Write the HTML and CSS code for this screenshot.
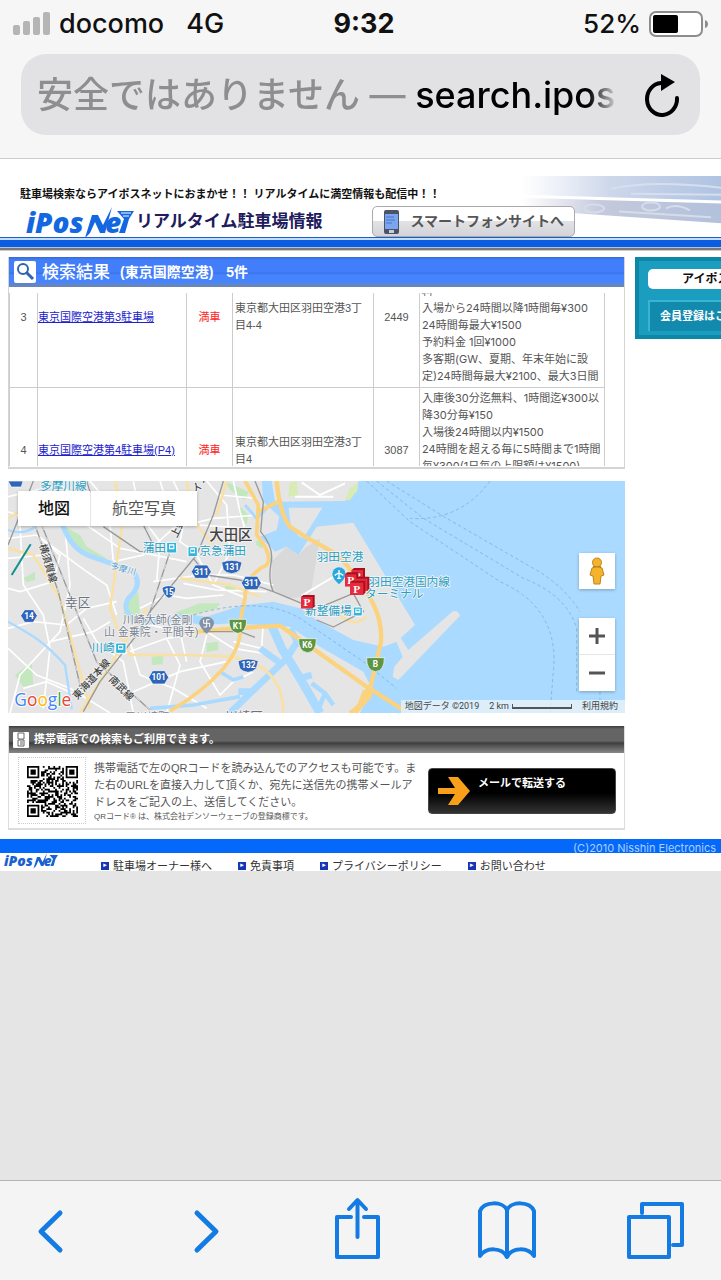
FILE: index.html
```html
<!DOCTYPE html>
<html lang="ja">
<head>
<meta charset="utf-8">
<meta name="viewport" content="width=device-width, initial-scale=1">
<title>iPosNet リアルタイム駐車場情報</title>
<link rel="stylesheet" href="styles.css">
</head>
<body>
<header class="browser-top">
  <div class="status">
    <div class="status-left">
      <svg class="signal" viewBox="0 0 38 24" aria-hidden="true"><rect x="0" y="13" width="7" height="10" rx="2"/><rect x="10" y="9" width="7" height="14" rx="2"/><rect x="20" y="5" width="7" height="18" rx="2"/><rect x="30" y="0" width="7" height="23" rx="2"/></svg>
      <span>docomo</span><span class="network">4G</span>
    </div>
    <div class="clock">9:32</div>
    <div class="status-right">
      <span>52%</span>
      <svg class="battery" viewBox="0 0 60 26" aria-hidden="true"><rect x="1" y="1" width="52" height="24" rx="6" fill="#fff" stroke="#8d8d8d" stroke-width="2"/><rect x="4" y="4" width="25" height="18" rx="2"/><path d="M56 9q3 1 3 4t-3 4z" fill="#8d8d8d"/></svg>
    </div>
  </div>
  <div class="address">
    <div class="address-text"><span class="insecure">安全ではありません —</span> search.ipos</div>
    <button class="reload" aria-label="再読み込み"><svg viewBox="0 0 40 44"><path d="M19 10A15 16 0 1 0 35 25" fill="none" stroke="#000" stroke-width="4" stroke-linecap="round"/><path d="M19 1v17l14-9z"/></svg></button>
  </div>
</header>

<main class="site">
  <div class="masthead">
    <svg class="skyline" viewBox="0 0 200 62" preserveAspectRatio="none" aria-hidden="true">
      <defs>
        <linearGradient id="sky"><stop offset="0" stop-color="#d5def0" stop-opacity="0"/><stop offset=".45" stop-color="#ccd7ea"/><stop offset="1" stop-color="#afc3e2"/></linearGradient>
        <linearGradient id="road"><stop offset="0" stop-color="#cfcfe0" stop-opacity="0"/><stop offset=".4" stop-color="#c4c9dc"/><stop offset="1" stop-color="#b3c1dc"/></linearGradient>
      </defs>
      <path d="M0 0H200V25L0 19z" fill="url(#sky)"/>
      <path d="M0 22L200 28V48L0 34z" fill="url(#road)"/>
      <path d="M90 13Q130 4 200 12M110 18L200 19" stroke="#d5dff0" stroke-width="2" fill="none"/>
      <g fill="none" stroke="#d5dcea" stroke-width="2"><ellipse cx="73" cy="33" rx="10" ry="4"/><ellipse cx="130" cy="31" rx="9" ry="4"/><path d="M98 36L190 42M145 33q10-6 24 2"/></g>
    </svg>
    <p class="tagline">駐車場検索ならアイポスネットにおまかせ！！ リアルタイムに満空情報も配信中！！</p>
    <div class="brand-row">
      <h1 class="brand">
        <svg class="logo" viewBox="0 0 110 30" role="img" aria-label="iPosNet"><text x="0" y="26">iPos</text><path d="M59 31L66 8H72L77 18L86 0L79 26H74L69 15L64 26z"/><text class="logo-e" x="79" y="26">e</text><path d="M93 26L98 12L91 4H108L103 12L99 26z"/><path d="M95 6h10M97 9h6" stroke="#fff"/></svg>
        <span>リアルタイム駐車場情報</span>
      </h1>
      <button class="phone-site">
        <svg viewBox="0 0 18 26" aria-hidden="true"><rect x="1" y="1" width="15" height="24" rx="2" fill="#4c5364"/><rect x="2" y="5" width="13" height="15" fill="#79a6ef"/><path d="M3 8h8M3 11h9M3 14h6" stroke="#4a77c8"/><rect x="6" y="21" width="5" height="3" fill="#c9ced8"/></svg>
        スマートフォンサイトへ
      </button>
    </div>
  </div>
  <div class="rule"></div>

  <div class="columns">
    <div class="main">
      <section class="results">
        <h2 class="results-head">
          <svg viewBox="0 0 24 24" aria-hidden="true"><rect x="1" y="1" width="22" height="22" rx="2" fill="#fff"/><circle cx="10" cy="9" r="5" fill="none" stroke="#2f63b5" stroke-width="2"/><path d="M13 12l7 7" stroke="#2f63b5" stroke-width="3"/></svg>
          <span class="results-title">検索結果</span><span>(東京国際空港)</span><span class="results-count">5件</span>
        </h2>
        <div class="results-scroll">
          <table>
            <colgroup><col class="c-no"><col class="c-name"><col class="c-state"><col><col class="c-dist"><col class="c-fee"></colgroup>
            <tbody>
              <tr class="row-three">
                <td class="center">3</td>
                <td><a href="#p3">東京国際空港第3駐車場</a></td>
                <td class="center full">満車</td>
                <td class="pad">東京都大田区羽田空港3丁<br>目4-4</td>
                <td class="center">2449</td>
                <td class="fee">料<br>入場から24時間以降1時間毎¥300<br>24時間毎最大¥1500<br>予約料金 1回¥1000<br>多客期(GW、夏期、年末年始に設<br>定)24時間毎最大¥2100、最大3日間</td>
              </tr>
              <tr class="row-four">
                <td class="center">4</td>
                <td><a href="#p4">東京国際空港第4駐車場(P4)</a></td>
                <td class="center full">満車</td>
                <td class="pad">東京都大田区羽田空港3丁<br>目4</td>
                <td class="center">3087</td>
                <td class="fee">入庫後30分迄無料、1時間迄¥300以<br>降30分毎¥150<br>入場後24時間以内¥1500<br>24時間を超える毎に5時間まで1時間<br>毎¥300(1日毎の上限額は¥1500)</td>
              </tr>
            </tbody>
          </table>
        </div>
      </section>

      <section class="map" aria-label="地図">
        <svg class="map-art" viewBox="24 18 1851 696" preserveAspectRatio="xMidYMid slice">
          <rect x="24" y="18" width="1851" height="696" fill="#e5e5e5"/>
          <path d="M815 260L860 215L895 240L920 215L960 190L930 365L860 370L815 340z" fill="#d9d9d9"/>
          <g fill="#c3e8bd">
            <path d="M195 155L240 180L260 215L320 250L300 260L240 225L205 195z"/><path d="M375 390L415 350L420 420L395 445L370 420z"/><path d="M520 415L600 385L660 385L650 400L560 425z"/><path d="M45 600L95 560L100 630L70 635z"/><path d="M455 545L490 540L488 568L455 570z"/><path d="M618 505L655 500L655 525L620 532z"/><path d="M675 333h32v12h-32z"/><path d="M70 310L105 290L105 315L80 322z"/><path d="M675 18L745 50L735 75L690 45z"/><path d="M720 95L745 120L740 150L718 120zM770 195l20 8l-4 18l-18-12z"/>
          </g>
          <g class="local">
            <path d="M24 110L140 150L260 150L360 220L560 260M24 190L110 180L180 240L160 320L60 350L24 340M60 150L70 330L130 420L150 520L130 700M24 460L100 440L200 450L260 400L350 380M24 520L110 600L210 640L330 714M110 180L260 290L320 330L350 420M190 100L210 330L180 470L60 600L30 714M330 150L340 260L430 240L520 160L640 130L780 120M400 18L420 120L480 200L470 320M520 18L560 100L540 200L600 240L740 220M590 240L640 330L740 370M620 18L680 90L690 230L640 330M700 18L720 110L740 180M460 320L600 300L700 300L820 330M420 400L500 360L560 370L670 360M360 540L500 490L620 470L700 520L820 540M390 500L420 600L520 640L620 700M500 490L540 570L500 714M400 650L540 590L680 560M620 480L600 560L660 660L700 620L760 590M430 445L540 470L560 560M250 430L290 500L370 560L400 714M150 500L280 470L330 440M600 150L740 160M660 60L770 70M24 250L130 240M70 640L140 620L230 660M480 18L500 80M270 18L330 90L480 80M24 65L180 30L220 60M550 325L650 345L800 350M790 440L785 520L700 500"/>
          </g>
          <g fill="none" stroke="#aadaff" stroke-linecap="round" stroke-linejoin="round">
            <path d="M190 155Q215 225 275 245T400 290Q430 330 385 370Q360 410 420 445L540 430" stroke-width="15"/>
            <path d="M24 440Q80 470 115 495T195 570L215 700" stroke-width="7"/>
            <path d="M24 165Q60 180 100 160L115 50L180 20" stroke-width="7"/>
          </g>
          <path d="M1075 18H1875V714H1080L1115 640L1090 590L960 515L870 455L700 445L600 450L520 430L540 415L620 425L720 392L820 380L900 400L950 435L1060 495L1150 515L1190 500L1245 450L1060 143L950 155L895 240L860 215L825 230L780 185L830 165L838 125L790 80L785 18H815L825 80L1035 78L1070 50z" fill="#aadaff"/>
          <g fill="none" stroke="#aadaff" stroke-linejoin="round">
            <path d="M810 440L845 520L870 560L900 610L960 714" stroke-width="26"/><path d="M870 460L892 500L860 550L745 660L690 714M780 520L835 560M760 650L715 650M900 610L935 600" stroke-width="20"/><path d="M935 625L975 655L950 714M975 655L1000 690" stroke-width="14"/><path d="M450 700L580 690L720 665M660 590L700 615L730 605" stroke-width="11"/><path d="M735 90L770 130L800 100M800 230L815 260" stroke-width="9"/>
          </g>
          <g fill="#e5e5e5">
            <path d="M866 98H967L910 190L895 182L872 150z"/><path d="M1183 485L1195 478L1225 525L1355 412Q1372 400 1380 422L1195 615L1178 605L1183 575L1208 545z"/>
          </g>
          <path d="M868 25L890 18L895 60L865 65zM1035 75L1050 40L1075 22L1072 45L1050 76z" fill="#d8ebb5"/>
          <g fill="none" stroke="#fff" stroke-width="6"><path d="M905 22L960 60L1035 25M885 65H1000M905 362L1010 300L1025 290"/></g>
          <g fill="none" stroke="#f9e1a6" stroke-width="8" stroke-linejoin="round"><path d="M345 18L370 130L330 400L360 480L390 540L560 540L700 545L770 570Q850 610 850 714M24 130L110 80L150 18M24 220L100 240L180 370L240 590L270 700M560 18L590 150L640 210M440 400L350 540L240 714M540 310L690 330L780 365M680 18L650 120"/><path d="M1020 420Q1060 460 1100 425"/></g>
          <g fill="none" stroke="#fbd27e" stroke-linejoin="round"><path d="M735 18L775 90L770 180Q820 240 800 270Q735 300 735 370L720 440Q730 510 670 580T510 708M845 75L775 110" stroke-width="11"/><path d="M540 475L700 460L840 452L910 500L1100 635L1210 705M830 18Q840 120 870 155Q920 190 970 215Q1030 245 1060 300Q1150 400 1143 500Q1120 600 1110 640Q1090 690 1050 714" stroke-width="13"/><path d="M1092 650L1115 640L1110 665L1070 710z" fill="#fbd27e" stroke-width="10"/></g>
          <g class="rail"><path d="M24 210L100 18M250 710L300 620L410 480L450 410L590 240L640 120L670 18M310 155L420 230L500 230M430 150L460 210M260 18L270 50M580 250L620 300L720 315L820 350L905 385M765 18L790 80L782 170Q825 220 812 270Q805 320 820 350M610 470H720L765 487M950 435L1000 456L1090 410L1060 355L965 395"/></g>
          <g class="rail"><path d="M125 150L290 560L450 705M105 150L175 350L240 630M510 230L445 425"/></g>
          <g class="rail-dash"><path d="M125 150L290 560L450 705M105 150L175 350L240 630M510 230L445 425"/></g>
          <path d="M35 300L92 208" stroke="#159090" stroke-width="6"/>
          <g fill="none" stroke="#88b9dc" stroke-width="3" stroke-dasharray="10 8"><path d="M1100 18L1230 140L1500 320Q1680 400 1660 590L1650 714M1130 18L1270 130L1570 310Q1700 360 1730 460V650M1160 18L1340 130L1600 280Q1690 330 1740 410M1470 18Q1380 140 1230 130M580 420Q780 360 900 430L1090 560L1190 640M1800 650V714"/></g>

          <g class="place"><text x="628" y="196" class="city">大田区</text><text x="195" y="396" class="ward">幸区</text><text x="368" y="448">川崎大師(金剛</text><text x="312" y="484">山 金乗院・平間寺)</text><text x="375" y="738">元川崎町</text><text class="ward" x="675" y="738">川崎区</text></g>
          <g class="station"><text x="428" y="230">蒲田</text><text x="598" y="240">京急蒲田</text><text x="274" y="530">川崎</text><text x="950" y="258">羽田空港</text><text x="1105" y="333">羽田空港国内線</text><text x="1095" y="368">ターミナル</text><text x="915" y="420">新整備場</text><text x="120" y="45">多摩川線</text><text x="330" y="280" transform="rotate(16 330 280)" class="small">多摩川</text></g>
          <g class="railname"><text transform="translate(118 210) rotate(74)">横須賀線</text><text transform="translate(232 675) rotate(-48)">東海道本線</text><text transform="translate(325 615) rotate(45)">南武線</text><text transform="translate(530 190) rotate(-64)">上野東京ライン</text></g>
          <g fill="#31b4dd" stroke="#fff" stroke-width="3"><rect x="500" y="202" width="30" height="32" rx="4"/><rect x="564" y="215" width="28" height="30" rx="4"/><rect x="347" y="504" width="31" height="31" rx="4"/><rect x="1060" y="396" width="27" height="27" rx="4"/></g>
          <g fill="#fff"><path d="M507 208h16v15h-16zM571 220h14v15h-14zM354 510h16v14h-16zM1066 401h15v13h-15z"/></g>
          <g fill="#31b4dd"><path d="M510 212h10v6h-10zM573 224h10v6h-10zM357 514h10v6h-10zM1069 404h9v5h-9z"/></g>
          <g fill="#2f65b8" stroke="#fff" stroke-width="2">
            <path d="M586 270h36l12 20l-12 20h-36l-12-20z"/><path d="M736 304h36l12 20l-12 20h-36l-12-20z"/><path d="M458 587h36l12 20l-12 20h-36l-12-20z"/><path d="M74 404h26l12 18l-12 20h-26l-12-20z"/><path d="M24 18h45l-5 18H34z"/>
            <path d="M665 262q30-12 61 0l-6 22q-8 10-25 12q-17-2-25-12z"/><path d="M714 558q30-12 61 0l-6 22q-8 10-25 12q-17-2-25-12z"/><path d="M486 338q20-12 41 0q-1 24-20 32q-18-8-21-32z"/>
          </g>
          <g fill="#5d9540" stroke="#fff" stroke-width="2"><path d="M687 433h53q0 40-27 42q-27-4-26-42z"/><path d="M896 491h53q0 40-27 42q-27-4-26-42z"/><path d="M1100 548h53q0 40-27 42q-27-4-26-42z"/></g>
          <g class="shield"><text x="604" y="299">311</text><text x="754" y="333">311</text><text x="476" y="616">101</text><text x="87" y="431">14</text><text x="696" y="285">131</text><text x="745" y="580">132</text><text x="507" y="361">15</text><text x="713" y="461">K1</text><text x="922" y="519">K6</text><text x="1126" y="576">B</text></g>
          <path d="M620 476q-22-20-22-31a22 20 0 0 1 44 0q0 11-22 31z" fill="#8293a8"/><path d="M611 434v11h18v11M629 434h-9v22h-9" stroke="#fff" stroke-width="3" fill="none"/>
          <path d="M1017 328q-20-18-20-31a20 20 0 0 1 40 0q0 13-20 31z" fill="#26a9dc"/><path d="M1017 285v25m-13-9l13-8l13 8m-19 9h12" stroke="#fff" stroke-width="4" fill="none"/>
          <g class="parking">
            <g transform="translate(1055 279)"><path d="M0 6L7 0H40V36L34 42H0z" fill="#a80f20"/><path d="M0 6h34v36H0z" fill="#e62c3c"/><text x="17" y="36">P</text></g>
            <g transform="translate(1035 292)"><path d="M0 6L7 0H40V36L34 42H0z" fill="#a80f20"/><path d="M0 6h34v36H0z" fill="#e62c3c"/><text x="17" y="36">P</text></g>
            <g transform="translate(1068 305)"><path d="M0 6L7 0H40V36L34 42H0z" fill="#a80f20"/><path d="M0 6h34v36H0z" fill="#e62c3c"/></g>
            <g transform="translate(1050 317)"><path d="M0 6L7 0H46V36L40 42H0z" fill="#a80f20"/><path d="M0 6h40v36H0z" fill="#e62c3c"/><text x="20" y="36">P</text></g>
            <g transform="translate(903 360)"><path d="M0 6L7 0H41V34L35 40H0z" fill="#a80f20"/><path d="M0 6h35v34H0z" fill="#e62c3c"/><text x="18" y="34">P</text></g>
          </g>
          <text class="google" x="43" y="694"><tspan fill="#4285f4">G</tspan><tspan fill="#ea4335">o</tspan><tspan fill="#fbbc05">o</tspan><tspan fill="#4285f4">g</tspan><tspan fill="#34a853">l</tspan><tspan fill="#ea4335">e</tspan></text>
        </svg>
        <div class="map-types"><button class="active">地図</button><button>航空写真</button></div>
        <div class="map-tools">
          <button class="pegman" aria-label="ストリートビュー"><svg viewBox="0 0 18 28"><g fill="#f5b32b" stroke="#bd8420"><path d="M4 11L2 18l3 1l1 8h3h3l1-8l3-1l-2-7q-5-3-10 0z"/><circle cx="9" cy="5.500" r="4.500"/></g><path d="M5 9h8v1H5z" fill="#bd8420"/></svg></button>
          <div class="zoomer">
            <button aria-label="拡大"><svg viewBox="0 0 18 18"><path d="M1 9h16M9 1v16"/></svg></button>
            <button aria-label="縮小"><svg viewBox="0 0 18 18"><path d="M1 9h16"/></svg></button>
          </div>
        </div>
        <div class="map-credit"><span>地図データ ©2019</span><span>2 km</span><i class="scale"></i><a href="#terms">利用規約</a></div>
      </section>

      <section class="mobile">
        <h2 class="mobile-head"><svg viewBox="0 0 16 16" aria-hidden="true"><rect width="16" height="16" rx="1" fill="#fff"/><path d="M5 1h6v6H5zM5 8h6v6H5zM7 10h3M7 12h3" fill="none" stroke="#666"/></svg>携帯電話での検索もご利用できます。</h2>
        <div class="mobile-body">
          <div class="qr"><svg id="qr" viewBox="0 0 29 29" role="img" aria-label="QRコード"><path/></svg></div>
          <div class="mobile-text">
            <p>携帯電話で左のQRコードを読み込んでのアクセスも可能です。ま<br>た右のURLを直接入力して頂くか、宛先に送信先の携帯メールア<br>ドレスをご記入の上、送信してください。</p>
            <p class="note">QRコード® は、株式会社デンソーウェーブの登録商標です。</p>
          </div>
          <button class="send"><svg viewBox="0 0 32 28" aria-hidden="true"><path d="M0 11h17L10 0h10l12 14l-12 14H10l7-11H0z"/></svg><span>メールで転送する</span></button>
        </div>
      </section>
    </div>

    <aside class="side">
      <div class="side-title">アイポス</div>
      <button class="side-button">会員登録はこ</button>
    </aside>
  </div>

  <footer class="footer">
    <div class="copyright">(C)2010 Nisshin Electronics</div>
    <nav class="footer-nav">
      <svg class="footer-logo" viewBox="0 0 110 30" role="img" aria-label="iPosNet"><text x="0" y="26">iPos</text><path d="M59 31L66 8H72L77 18L86 0L79 26H74L69 15L64 26z"/><text class="logo-e" x="79" y="26">e</text><path d="M93 26L98 12L91 4H108L103 12L99 26z"/></svg>
      <a href="#owner">駐車場オーナー様へ</a><a href="#disclaimer">免責事項</a><a href="#privacy">プライバシーポリシー</a><a href="#contact">お問い合わせ</a>
    </nav>
  </footer>
</main>

<nav class="toolbar">
  <button aria-label="戻る"><svg class="chevron" viewBox="0 0 64 64"><path d="M41 16L22 34.500L41 53"/></svg></button>
  <button aria-label="進む"><svg class="chevron" viewBox="0 0 64 64"><path d="M27 16L46 34.500L27 53"/></svg></button>
  <button aria-label="共有"><svg viewBox="0 0 64 64"><path d="M30 20H16V60H57V20H43M36.500 40V4M28 12L36.500 3L45 12"/></svg></button>
  <button aria-label="ブックマーク"><svg viewBox="0 0 64 64"><path d="M35 13C31 4 12 4 8 14V59C14 50 30 50 35 60C40 50 56 50 62 59V14C58 4 39 4 35 13V60"/></svg></button>
  <button aria-label="タブ"><svg viewBox="0 0 64 64"><path d="M6 20H46V60H6zM19 16V7H59V48H50"/></svg></button>
</nav>
<script src="qr.js"></script>
</body>
</html>
```
FILE: styles.css
```css
* { box-sizing: border-box; margin: 0; padding: 0; }
body {
  display: flex;
  flex-direction: column;
  min-height: 100vh;
  background: #e5e5e5;
  color: #555;
  font: 11px/17px "Liberation Sans", "Noto Sans CJK JP", sans-serif;
  overflow-x: hidden;
}
button { border: 0; background: none; color: inherit; font: inherit; cursor: pointer; }
svg { display: block; flex: none; }

.browser-top { height: 159px; background: #f6f6f6; border-bottom: 1px solid #ccc; }
.status {
  display: grid;
  grid-template-columns: 1fr auto 1fr;
  align-items: center;
  height: 48px;
  padding: 0 12px 0 13px;
  color: #111;
  font: 500 27px/48px Inter, sans-serif;
}
.status-left, .status-right { display: flex; align-items: center; gap: 8px; }
.status-right { justify-content: flex-end; font-size: 26px; }
.network { margin-left: 14px; }
.clock { padding-left: 6px; font-weight: 700; }
.signal { width: 38px; height: 24px; fill: #b5b5b5; }
.battery { width: 60px; height: 26px; }
.address {
  display: flex;
  align-items: center;
  height: 81px;
  margin: 6px 21px 0;
  padding: 0 18px 0 16px;
  border-radius: 25px;
  background: #e2e2e5;
}
.address-text {
  flex: 1;
  overflow: hidden;
  white-space: nowrap;
  color: #000;
  font: 500 36px/60px Inter, "Noto Sans CJK JP", sans-serif;
  mask-image: linear-gradient(to right, #000 calc(100% - 30px), transparent);
}
.insecure { color: #8e8e91; }
.reload { margin-left: 24px; }
.reload svg { width: 40px; height: 44px; }

.site { background: #fff; overflow: hidden; }
.masthead { position: relative; height: 78px; padding: 27px 0 0 20px; }
.skyline { position: absolute; top: 17px; right: 0; width: 200px; height: 61px; }
.tagline { position: relative; color: #111; font-weight: 700; font-size: 11px; }
.brand-row { position: relative; display: flex; align-items: center; gap: 49px; padding-top: 3px; }
.brand { display: flex; align-items: center; color: #211a5c; font-size: 17px; line-height: 28px; }
.logo { width: 110px; height: 30px; margin-left: 6px; fill: #1368e2; overflow: visible; }
.logo text, .footer-logo text { font: italic 800 28px "Open Sans", sans-serif; }
.phone-site {
  display: flex;
  align-items: center;
  gap: 10px;
  height: 31px;
  padding: 0 10px 0 10px;
  border: 1px solid #aaa;
  border-radius: 5px;
  background: linear-gradient(#fff 50%, #e2e2e6 50%, #d3d3d8);
  color: #555;
  font-weight: 700;
  font-size: 14px;
  white-space: nowrap;
}
.phone-site svg { width: 18px; height: 26px; }
.rule {
  height: 14px;
  background: linear-gradient(#1a5fc4 0 1px, #c5dcf8 1px 3px, #0a5ce0 3px 10px, #b0c4e0 10px 11px, #777 11px 13px, #ccc 13px);
}

.columns { display: grid; grid-template-columns: minmax(0, 1fr) 86px; gap: 10px; padding: 6px 0 9px 8px; }
.main { display: flex; flex-direction: column; gap: 12px; }
.results { border: solid #d4d4d4; border-width: 0 1px 2px; }
.results-head {
  display: flex;
  align-items: center;
  gap: 10px;
  height: 30px;
  padding: 0 6px 0 4px;
  background: linear-gradient(#326bd5, #437efa 3px 15px, #3971e5 16px, #4684ff 18px 25px, #6686bd 28px);
  color: #fff;
  font-size: 14px;
}
.results-head svg { width: 24px; height: 24px; }
.results-title { margin-left: -5px; font-size: 17px; font-weight: 500; }
.results-count { margin-left: 3px; }
.results-scroll { height: 173px; margin: 6px 0 1px; overflow: hidden; }
table { width: calc(100% - 19px); margin-top: -13px; border-collapse: collapse; table-layout: fixed; }
.c-no { width: 28px; } .c-name { width: 149px; } .c-state { width: 46px; } .c-dist { width: 46px; } .c-fee { width: 185px; }
td { border: 1px solid #ccc; vertical-align: middle; white-space: nowrap; }
td.pad { padding-left: 2px; }
td.center { text-align: center; }
td.full { color: #f22; }
td a { color: #22c; }
td.fee { padding: 2px 0 2px 2px; vertical-align: top; font-family: Inter, "Noto Sans CJK JP", sans-serif; }
.row-three td { height: 106px; }
.row-three td:not(.fee) { padding-top: 28px; vertical-align: top; }
.row-three td.pad { padding-top: 19px; }
.row-four td { height: 126px; }

.map { position: relative; height: 232px; overflow: hidden; font-family: Roboto, "Noto Sans CJK JP", sans-serif; }
.map-art { width: 100%; height: 100%; font-family: Roboto, "Noto Sans CJK JP", sans-serif; }
.map-art text { paint-order: stroke; stroke: #f4f4f4; stroke-width: 5px; stroke-linejoin: round; }
.local { fill: none; stroke: #fff; stroke-width: 5px; }
.rail, .rail-dash { fill: none; stroke: #999; stroke-width: 4px; stroke-linejoin: round; }
.rail-dash { stroke: #ddd; stroke-width: 3px; stroke-dasharray: 16 24; }
.place { fill: #7b8593; font-size: 33px; }
.place .city { fill: #444; font-size: 43px; font-weight: 500; }
.place .ward { fill: #6b7280; font-size: 38px; }
.station { fill: #2a9fc4; font-size: 35px; }
.station .small { fill: #5b9cc8; font-size: 26px; }
.railname { fill: #444; font-size: 30px; font-weight: 500; }
.map-art .shield text { fill: #fff; stroke: none; font-size: 25px; font-weight: 700; text-anchor: middle; }
.map-art .parking text { fill: #fff; stroke: none; font: 700 34px "Liberation Serif", serif; text-anchor: middle; }
.map-art .google { font: 500 52px "Open Sans", sans-serif; stroke: #fff; stroke-width: 6px; }
.map-types { position: absolute; top: 10px; left: 10px; display: flex; gap: 1px; box-shadow: 0 1px 3px #0004; color: #555; font-size: 16px; }
.map-types button { height: 35px; padding: 0 21px; background: #fff; }
.map-types .active { padding: 0 20px; color: #111; font-weight: 500; }
.map-tools { position: absolute; top: 72px; right: 10px; width: 36px; }
.map-tools button { display: grid; place-items: center; width: 36px; height: 36px; background: #fff; }
.pegman { margin-bottom: 29px; box-shadow: 0 1px 3px #0004; }
.pegman svg { width: 18px; height: 28px; }
.zoomer { display: grid; gap: 1px; background: #e6e6e6; box-shadow: 0 1px 3px #0004; }
.zoomer svg { width: 18px; height: 18px; stroke: #555; stroke-width: 3; }
.map-credit {
  position: absolute;
  right: 0;
  bottom: 0;
  display: flex;
  align-items: center;
  gap: 10px;
  height: 13px;
  padding: 0 7px 0 4px;
  background: #e9f2f9cc;
  color: #444;
  font-size: 9px;
  line-height: 13px;
}
.map-credit a { color: inherit; text-decoration: none; }
.scale { width: 60px; height: 5px; margin-left: -7px; border: solid #555; border-width: 0 1px 2px; }

.mobile { border: 1px solid #ddd; border-width: 0 1px 2px; margin-top: 1px; }
.mobile-head {
  display: flex;
  align-items: center;
  gap: 5px;
  height: 27px;
  padding: 0 5px 0 4px;
  background: linear-gradient(#3c3c3c, #646464 3px 15px, #3e3e3e 17px, #555 20px, #888);
  color: #fff;
  font-size: 11px;
}
.mobile-head svg { width: 16px; height: 16px; }
.mobile-body { display: flex; align-items: flex-start; padding: 4px 8px 4px 9px; }
.qr { width: 68px; height: 67px; padding: 8px; border: 1px dotted #ccc; }
.qr svg { width: 51px; height: 51px; }
.mobile-text { flex: 1; padding: 3px 0 0 8px; white-space: nowrap; }
.note { font-size: 8px; line-height: 12px; }
.send {
  display: flex;
  align-items: flex-start;
  gap: 8px;
  width: 188px;
  height: 46px;
  margin-top: 11px;
  padding: 6px 9px;
  border: 1px solid #444;
  border-radius: 4px;
  background: linear-gradient(#000 55%, #333);
  color: #fff;
  font-weight: 700;
}
.send svg { width: 32px; height: 28px; margin-top: 2px; fill: #f9a01b; }

.side {
  height: 82px;
  padding: 8px 0 0 9px;
  border: 4px solid #0b87a8;
  border-right: 0;
  background: #1b9dc0;
  overflow: hidden;
  font-weight: 700;
  white-space: nowrap;
}
.side-title { height: 20px; padding-left: 34px; border-radius: 5px 0 0 5px; background: #fff; color: #111; font-size: 12px; line-height: 20px; }
.side-button { display: block; width: 100%; height: 31px; margin-top: 11px; padding-left: 10px; border: solid #38b5d2; border-width: 2px 0 0 2px; background: #128aae; color: #fff; text-align: left; overflow: hidden; }

.copyright { height: 14px; padding: 1px 5px 0; overflow: hidden; background: #0469fa; color: #a9d0ff; font-family: Inter, sans-serif; text-align: right; line-height: 17px; }
.footer-nav { display: flex; height: 18px; padding-left: 4px; overflow: hidden; }
.footer-logo { width: 55px; height: 15px; margin-right: 42px; fill: #1a62cf; overflow: visible; }
.footer-nav a { position: relative; margin-right: 26px; padding: 5px 0 0 12px; color: #333; text-decoration: none; }
.footer-nav a::before {
  content: "▸";
  position: absolute;
  left: 0;
  top: 9px;
  width: 8px;
  height: 8px;
  background: #1636b5;
  color: #fff;
  font: 7px/7px "DejaVu Sans", sans-serif;
  text-align: center;
}

.toolbar { display: flex; justify-content: space-between; height: 100px; margin-top: auto; padding: 16px 34px 0 19px; border-top: 1px solid #b3b3b3; background: #f4f4f4; }
.toolbar button, .toolbar svg { width: 64px; height: 64px; }
.toolbar svg { fill: none; stroke: #147be2; stroke-width: 4; stroke-linecap: round; stroke-linejoin: round; }
.toolbar .chevron { stroke-width: 5; }
```
FILE: qr.js
```js
// Draws the site's QR symbol: three finder patterns and a seeded data field.
const size = 29;
let seed = 20101;
const next = () => (seed = (seed * 16807) % 2147483647) / 2147483647;
const finder = (x, y) => {
  const ring = Math.max(Math.abs(x - 3), Math.abs(y - 3));
  return ring === 3 || ring <= 1;
};
let d = "";
for (let y = 0; y < size; y++) {
  for (let x = 0; x < size; x++) {
    const right = x >= size - 8, bottom = y >= size - 8;
    let on = next() < 0.52;
    if (x < 8 && y < 8) on = x < 7 && y < 7 && finder(x, y);
    else if (right && y < 8) on = x > size - 8 && y < 7 && finder(x - size + 7, y);
    else if (x < 8 && bottom) on = x < 7 && y > size - 8 && finder(x, y - size + 7);
    if (on) d += `M${x} ${y}h1v1h-1z`;
  }
}
document.querySelector("#qr path").setAttribute("d", d);
```
